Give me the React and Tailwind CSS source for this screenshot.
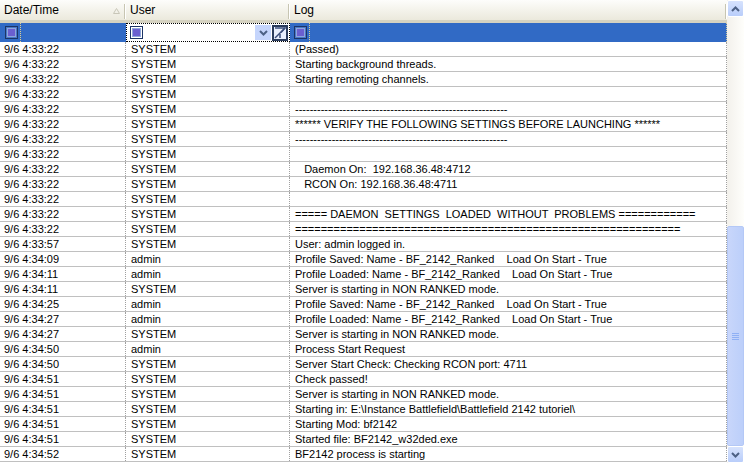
import React from 'react';

const rows = [
    ['9/6 4:33:22', 'SYSTEM', '(Passed)'],
    ['9/6 4:33:22', 'SYSTEM', 'Starting background threads.'],
    ['9/6 4:33:22', 'SYSTEM', 'Starting remoting channels.'],
    ['9/6 4:33:22', 'SYSTEM', ''],
    ['9/6 4:33:22', 'SYSTEM', '----------------------------------------------------------'],
    ['9/6 4:33:22', 'SYSTEM', '****** VERIFY THE FOLLOWING SETTINGS BEFORE LAUNCHING ******'],
    ['9/6 4:33:22', 'SYSTEM', '----------------------------------------------------------'],
    ['9/6 4:33:22', 'SYSTEM', ''],
    ['9/6 4:33:22', 'SYSTEM', '   Daemon On:  192.168.36.48:4712'],
    ['9/6 4:33:22', 'SYSTEM', '   RCON On: 192.168.36.48:4711'],
    ['9/6 4:33:22', 'SYSTEM', ''],
    ['9/6 4:33:22', 'SYSTEM', '===== DAEMON  SETTINGS  LOADED  WITHOUT  PROBLEMS ============'],
    ['9/6 4:33:22', 'SYSTEM', '============================================================'],
    ['9/6 4:33:57', 'SYSTEM', 'User: admin logged in.'],
    ['9/6 4:34:09', 'admin', 'Profile Saved: Name - BF_2142_Ranked    Load On Start - True'],
    ['9/6 4:34:11', 'admin', 'Profile Loaded: Name - BF_2142_Ranked    Load On Start - True'],
    ['9/6 4:34:11', 'SYSTEM', 'Server is starting in NON RANKED mode.'],
    ['9/6 4:34:25', 'admin', 'Profile Saved: Name - BF_2142_Ranked    Load On Start - True'],
    ['9/6 4:34:27', 'admin', 'Profile Loaded: Name - BF_2142_Ranked    Load On Start - True'],
    ['9/6 4:34:27', 'SYSTEM', 'Server is starting in NON RANKED mode.'],
    ['9/6 4:34:50', 'admin', 'Process Start Request'],
    ['9/6 4:34:50', 'SYSTEM', 'Server Start Check: Checking RCON port: 4711'],
    ['9/6 4:34:51', 'SYSTEM', 'Check passed!'],
    ['9/6 4:34:51', 'SYSTEM', 'Server is starting in NON RANKED mode.'],
    ['9/6 4:34:51', 'SYSTEM', 'Starting in: E:\\Instance Battlefield\\Battlefield 2142 tutoriel\\'],
    ['9/6 4:34:51', 'SYSTEM', 'Starting Mod: bf2142'],
    ['9/6 4:34:51', 'SYSTEM', 'Started file: BF2142_w32ded.exe'],
    ['9/6 4:34:52', 'SYSTEM', 'BF2142 process is starting'],
];

const Check = ({ light }) => (
    <div className={`w-[13px] h-[13px] border border-[#1c3566] flex items-center justify-center ${light ? 'bg-white' : 'bg-[#4a78c8]'}`}>
        <div className="w-[9px] h-[9px] border border-[#8fa6dc] flex items-center justify-center">
            <div className="w-[7px] h-[7px] bg-[#6a5fd0]" />
        </div>
    </div>
);

const HeaderCell = ({ label, width, sort }) => (
    <div className={`${width} relative flex items-center h-full pl-[4px]`}>
        <span>{label}</span>
        {sort && (
            <svg className="absolute right-[6px] top-[8px]" width="7" height="6" viewBox="0 0 7 6">
                <path d="M0.5 5.5 L3.5 0.5 L6.5 5.5 Z" fill="none" stroke="#c8c6b8" />
            </svg>
        )}
        <div className="absolute right-0 top-[4px] h-[15px] w-[2px] border-l border-[#c7c5b2] border-r border-r-white" />
    </div>
);

const ScrollArrow = ({ up }) => (
    <div className="w-[17px] h-[17px] rounded-[2px] border border-white bg-gradient-to-b from-[#d7e3fd] to-[#b9cdfa] flex items-center justify-center">
        <svg width="9" height="6" viewBox="0 0 9 6">
            <path d={up ? 'M1 5 L4.5 1.5 L8 5' : 'M1 1 L4.5 4.5 L8 1'} fill="none" stroke="#4d6185" strokeWidth="2" />
        </svg>
    </div>
);

const App = () => {
    return (
        <div className="w-[744px] h-[463px] flex bg-white overflow-hidden text-[11px] text-black" style={{ fontFamily: '"Liberation Sans", Arial, sans-serif' }}>
            <div className="w-[727px] flex flex-col">
                <div className="h-[23px] flex text-[12px] bg-gradient-to-b from-[#fdfdfb] to-[#ebe9dc] border-b-[3px] border-[#d5d2c1] shrink-0">
                    <HeaderCell label="Date/Time" width="w-[126px]" sort />
                    <HeaderCell label="User" width="w-[164px]" />
                    <HeaderCell label="Log" width="w-[437px]" />
                </div>
                <div className="h-[19px] flex bg-[#316ac5] shrink-0">
                    <div className="w-[126px] flex items-center">
                        <div className="pl-[5px] pr-[2px]"><Check /></div>
                        <div className="h-full border-l border-dotted border-[#e0cf8c]" />
                    </div>
                    <div className="w-[164px] flex items-center bg-white border border-dotted border-black h-full">
                        <div className="pl-[3px]"><Check light /></div>
                        <div className="flex-1" />
                        <div className="w-[16px] h-[15px] bg-[#c5d5fc] flex items-center justify-center">
                            <svg width="9" height="6" viewBox="0 0 9 6">
                                <path d="M1 1 L4.5 4.5 L8 1" fill="none" stroke="#4d6185" strokeWidth="2" />
                            </svg>
                        </div>
                        <div className="ml-[1px] mr-[1px] w-[16px] h-[16px] border-2 border-[#2b3c5c] bg-[#e8eefc] flex items-center justify-center">
                            <svg width="12" height="12" viewBox="0 0 12 12">
                                <path d="M1 1 H11 L7 5.5" fill="none" stroke="#3a4d7a" strokeWidth="1.5" />
                                <path d="M1 11 L11 1" fill="none" stroke="#3a4d7a" strokeWidth="1.5" />
                                <path d="M6 7 V11" fill="none" stroke="#3a4d7a" strokeWidth="1.5" />
                            </svg>
                        </div>
                    </div>
                    <div className="flex-1 flex items-center border-r border-dotted border-[#d0c8a0]">
                        <div className="pl-[4px] pr-[2px]"><Check /></div>
                        <div className="h-full border-l border-dotted border-[#e0cf8c]" />
                    </div>
                </div>
                {rows.map((r, i) => (
                    <div key={i} className="h-[15px] flex border-b border-[#c0c0c0] shrink-0 leading-[15px]">
                        <div className="w-[126px] pl-[4px] border-r border-dotted border-[#a0a0a0] whitespace-pre">{r[0]}</div>
                        <div className="w-[164px] pl-[5px] border-r border-dotted border-[#a0a0a0] whitespace-pre">{r[1]}</div>
                        <div className="flex-1 pl-[5px] border-r border-dotted border-[#a0a0a0] whitespace-pre overflow-hidden">{r[2]}</div>
                    </div>
                ))}
            </div>
            <div className="w-[17px] h-full flex flex-col bg-gradient-to-r from-[#f3f1ec] to-[#fefefb]">
                <ScrollArrow up />
                <div className="h-[209px]" />
                <div className="h-[220px] mx-0 rounded-[2px] border border-[#b4c8f6] bg-gradient-to-r from-[#c8d6fb] to-[#bccffa] flex items-center justify-center">
                    <div className="flex flex-col gap-[1px]">
                        <div className="w-[7px] h-[1px] bg-[#eef3fe] border-b border-[#8fb0f5]" />
                        <div className="w-[7px] h-[1px] bg-[#eef3fe] border-b border-[#8fb0f5]" />
                        <div className="w-[7px] h-[1px] bg-[#eef3fe] border-b border-[#8fb0f5]" />
                        <div className="w-[7px] h-[1px] bg-[#eef3fe] border-b border-[#8fb0f5]" />
                    </div>
                </div>
                <div className="flex-1" />
                <ScrollArrow />
            </div>
        </div>
    );
};

export default App;
